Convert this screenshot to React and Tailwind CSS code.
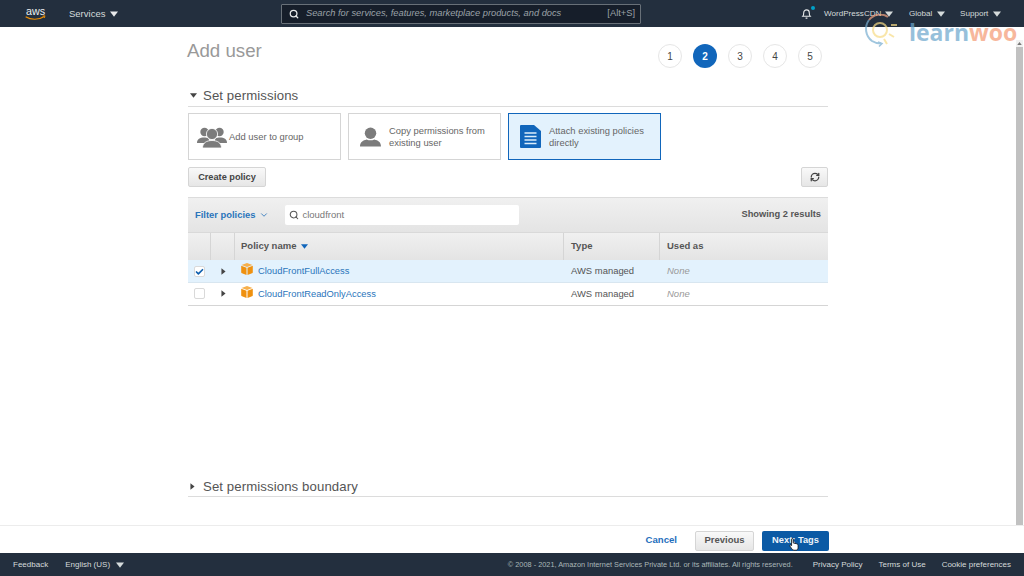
import React from 'react';
import { Search, RefreshCw, ChevronDown, Check } from 'lucide-react';

const Caret = ({ className = 'w-[8px] h-[6px]' }) => (
    <svg viewBox="0 0 10 8" preserveAspectRatio="none" className={`fill-current ${className}`}>
        <path d="M0 0.5h10L5 7.5z" />
    </svg>
);

const CaretRight = () => (
    <svg viewBox="0 0 6 8" className="w-[5px] h-[7px] fill-[#444]">
        <path d="M0.5 0v8L5.5 4z" />
    </svg>
);

const AwsLogo = () => (
    <svg viewBox="0 0 24 16" className="w-[23px] h-[15px]">
        <text x="12" y="9.5" textAnchor="middle" fontSize="11.5" fontFamily="Liberation Sans, sans-serif" fill="#eceff1">aws</text>
        <path d="M1.5 11.5c5.5 3.6 14 3.6 20-.2" fill="none" stroke="#f29100" strokeWidth="1.2" />
        <path d="M19.5 10.8l2.6-.4-.6 2.4" fill="none" stroke="#f29100" strokeWidth="0.9" />
    </svg>
);

const GroupIcon = () => (
    <svg viewBox="0 0 30 22" className="w-[30px] h-[22px] fill-[#7b7b7b] shrink-0">
        <circle cx="7.5" cy="6" r="4.2" />
        <circle cx="22.5" cy="6" r="4.2" />
        <path d="M0 17c0-4 3-5.5 7-5.5s5 1 5 3V17z" />
        <path d="M30 17c0-4-3-5.5-7-5.5s-5 1-5 3V17z" />
        <circle cx="15" cy="8" r="5.6" stroke="#fff" strokeWidth="0.8" />
        <path d="M5.5 22c0-5 4-7.5 9.5-7.5s9.5 2.5 9.5 7.5z" stroke="#fff" strokeWidth="0.8" />
    </svg>
);

const UserIcon = () => (
    <svg viewBox="0 0 22 20" className="w-[21px] h-[20px] fill-[#7b7b7b] shrink-0">
        <circle cx="11" cy="6" r="6" />
        <path d="M0 20c0-5 3-6.5 7-7.5 2.5 1.3 5.5 1.3 8 0 4 1 7 2.5 7 7.5z" />
    </svg>
);

const DocIcon = () => (
    <svg viewBox="0 0 21 23" className="w-[21px] h-[23px] shrink-0">
        <path d="M1 0h13l7 6v16a1 1 0 0 1-1 1H1a1 1 0 0 1-1-1V1a1 1 0 0 1 1-1z" fill="#1166bb" />
        <path d="M4.5 8h12M4.5 11.5h12M4.5 15h12M4.5 18.5h12" stroke="#dceefb" strokeWidth="1.3" />
    </svg>
);

const PolicyIcon = () => (
    <svg viewBox="0 0 12 12" className="w-[12px] h-[12px] shrink-0">
        <path d="M6 0l5.5 2L6 4 .5 2z" fill="#f7b04c" />
        <path d="M.2 2.7L5.500 4.700V12L1 10.300a1 1 0 0 1-.8-1z" fill="#ef9110" />
        <path d="M11.800 2.700L6.500 4.700V12l4.500-1.700a1 1 0 0 0 .8-1z" fill="#ef9110" />
    </svg>
);

const Card = ({ icon, active, children }) => (
    <div className={`w-[153px] h-[47px] flex items-center border-[1.5px] ${active ? 'border-[#1166bb] bg-[#e3f2fd]' : 'border-[#d5d5d5] bg-white'}`}>
        {icon}
        <span className="text-[9.4px] leading-[12px] text-[#666]">{children}</span>
    </div>
);

const Step = ({ n, active }) => (
    <div className={`w-6 h-6 rounded-full flex items-center justify-center text-[10px] ${active ? 'bg-[#1166bb] text-white font-bold' : 'border border-[#e6e6e6] text-[#444]'}`}>
        {n}
    </div>
);

const PolicyRow = ({ name, selected }) => (
    <div className={`flex items-center border-b ${selected ? 'h-[23px] pt-px bg-[#e3f2fd] border-[#d8e6f0]' : 'h-[22.5px] bg-white border-[#d5d5d5]'}`}>
        <div className="w-[23px] flex justify-center">
            <div className="w-[11px] h-[11px] rounded-[2px] border border-[#d9d9d9] bg-white flex items-center justify-center">
                {selected && <Check className="w-[10px] h-[10px] text-[#0f5fae]" strokeWidth={4.5} />}
            </div>
        </div>
        <div className="w-[24px] flex justify-center"><CaretRight /></div>
        <div className="w-[329px] pl-[6px] flex items-center gap-[5px]">
            <span className="-mt-[4px]"><PolicyIcon /></span>
            <span className="text-[9.35px] text-[#2a75bb]">{name}</span>
        </div>
        <div className="w-[96px] pl-[7px] text-[9.45px] text-[#555]">AWS managed</div>
        <div className="pl-[7px] text-[9.5px] italic text-[#999]">None</div>
    </div>
);

const App = () => {
    return (
        <div className="w-[1024px] h-[576px] relative flex flex-col overflow-hidden bg-white font-['Liberation_Sans',Arial,sans-serif]">
            {/* top nav */}
            <header className="h-[27px] shrink-0 bg-[#232f3e] flex items-center text-[#d5dbdb]">
                <div className="ml-[24px] w-[45px] flex"><AwsLogo /></div>
                <div className="mt-px flex items-center gap-[5px] w-[212px] text-[9.5px]">
                    Services <Caret className="w-[8px] h-[6px] text-[#e8eaeb]" />
                </div>
                <div className="w-[360px] h-[20px] bg-[#161e2a] border border-[#687078] rounded-[1px] flex items-center pl-[7px] pr-[5px] text-[9.3px]">
                    <Search className="w-[10px] h-[10px] text-[#e8eaeb] mr-[7px]" strokeWidth={3} />
                    <span className="italic text-[#9ba2a8] flex-1">Search for services, features, marketplace products, and docs</span>
                    <span className="text-[#9ba2a8]">[Alt+S]</span>
                </div>
                <div className="ml-[160px] relative w-[12px] flex">
                    <svg viewBox="0 0 12 12" className="w-[11px] h-[11px] fill-none stroke-[#e8eaeb]" strokeWidth="1.2">
                        <path d="M2 9c1-1 1-2 1-4a3 3 0 0 1 6 0c0 2 0 3 1 4zM5 11h2" />
                    </svg>
                    <span className="absolute -top-[2px] left-[10px] w-[4px] h-[4px] rounded-full bg-[#00a1c9]" />
                </div>
                <div className="mt-px ml-[11px] flex items-center gap-[4px] w-[85px] text-[8.1px]">WordPressCDN <Caret /></div>
                <div className="mt-px flex items-center gap-[5px] w-[51px] text-[8.1px]">Global <Caret /></div>
                <div className="mt-px flex items-center gap-[5px] text-[8.1px]">Support <Caret /></div>
            </header>

            {/* page + scrollbar */}
            <div className="flex-1 flex min-h-0">
                <main className="flex-1 min-w-0 flex justify-center">
                    <div className="w-[640px] flex flex-col">
                        <div className="flex justify-between">
                            <h1 className="mt-[13px] -ml-px text-[18.7px] leading-[22px] text-[#999]">Add user</h1>
                            <div className="flex gap-[11px] mt-[17px] mr-[6px]">
                                <Step n="1" />
                                <Step n="2" active />
                                <Step n="3" />
                                <Step n="4" />
                                <Step n="5" />
                            </div>
                        </div>

                        <div className="mt-[18px] flex items-center h-[21px] border-b border-[#dcdcdc] pb-[1px]">
                            <Caret className="w-[7px] h-[5px] text-[#444] ml-[2px] mr-[6px]" />
                            <h2 className="text-[13.2px] leading-[16px] tracking-[0.1px] text-[#555]">Set permissions</h2>
                        </div>

                        <div className="flex gap-[7px] mt-[6px]">
                            <Card icon={<span className="ml-[7.5px] mr-[2.5px] flex"><GroupIcon /></span>}>Add user to group</Card>
                            <Card icon={<span className="ml-[10.5px] mr-[8.5px] flex"><UserIcon /></span>}>Copy permissions from<br />existing user</Card>
                            <Card active icon={<span className="ml-[10.5px] mr-[8.5px] flex"><DocIcon /></span>}>Attach existing policies<br />directly</Card>
                        </div>

                        <div className="flex justify-between mt-[7px]">
                            <button className="w-[78px] h-[20px] pt-px rounded-[2px] border border-[#d5d5d5] bg-gradient-to-b from-[#f9f9f9] to-[#e6e6e6] text-[9.2px] font-bold text-[#444]">Create policy</button>
                            <button className="w-[27px] h-[20px] rounded-[2px] border border-[#d5d5d5] bg-gradient-to-b from-[#f9f9f9] to-[#e6e6e6] flex items-center justify-center">
                                <RefreshCw className="w-[10px] h-[10px] text-[#444]" strokeWidth={3} />
                            </button>
                        </div>

                        {/* policies table */}
                        <div className="mt-[10px]">
                            <div className="h-[35px] bg-gradient-to-b from-[#f0f0f0] to-[#e4e4e4] border-t border-[#dcdcdc] flex items-center pl-[7px] pr-[7px]">
                                <span className="text-[9.4px] font-bold text-[#2a75bb]">Filter policies</span>
                                <ChevronDown className="w-[10px] h-[10px] text-[#2a75bb] ml-[4px]" />
                                <div className="ml-[16px] w-[234px] h-[20px] bg-white rounded-[2px] flex items-center pl-[4px]">
                                    <Search className="w-[10px] h-[10px] text-[#555] mr-[3px]" strokeWidth={2.5} />
                                    <span className="text-[9.5px] text-[#777]">cloudfront</span>
                                </div>
                                <span className="ml-auto text-[9.3px] font-bold text-[#555]">Showing 2 results</span>
                            </div>
                            <div className="h-[28px] bg-gradient-to-b from-[#f0f0f0] to-[#e4e4e4] border-t border-[#d9d9d9] flex items-center text-[9.5px] font-bold text-[#555]">
                                <div className="w-[23px] h-full border-r border-[#d5d5d5]" />
                                <div className="w-[24px] h-full border-r border-[#d5d5d5]" />
                                <div className="w-[329px] h-full border-r border-[#d5d5d5] pl-[6px] flex items-center gap-[5px]">
                                    Policy name <Caret className="w-[7px] h-[5px] text-[#1166bb]" />
                                </div>
                                <div className="w-[96px] h-full border-r border-[#d5d5d5] pl-[7px] flex items-center">Type</div>
                                <div className="pl-[7px]">Used as</div>
                            </div>
                            <PolicyRow name="CloudFrontFullAccess" selected />
                            <PolicyRow name="CloudFrontReadOnlyAccess" />
                        </div>

                        <div className="mt-auto mb-[28px] flex items-center h-[20px] border-b border-[#dcdcdc]">
                            <span className="ml-[2px] mr-[8px] flex"><CaretRight /></span>
                            <h2 className="text-[13.2px] leading-[16px] tracking-[0.1px] text-[#555]">Set permissions boundary</h2>
                        </div>
                    </div>
                </main>
                <div className="w-[8px] shrink-0 pr-px pt-[13px] flex flex-col">
                    <div className="h-[7px] bg-[#f1f1f1] flex justify-center items-center">
                        <svg viewBox="0 0 6 4" className="w-[5px] h-[3px] fill-[#777]"><path d="M3 0l3 4H0z" /></svg>
                    </div>
                    <div className="flex-1 bg-[#c1c1c1]" />
                </div>
            </div>

            {/* wizard actions */}
            <div className="h-[28px] shrink-0 border-t border-[#ececec] bg-white flex items-center justify-end pr-[195px] pt-[2px]">
                <a className="text-[9.6px] font-bold text-[#1f6fbd] mr-[18px]">Cancel</a>
                <button className="w-[59px] h-[20px] mr-[8px] rounded-[2px] border border-[#d5d5d5] bg-gradient-to-b from-[#f9f9f9] to-[#e6e6e6] text-[9.5px] font-bold text-[#555]">Previous</button>
                <button className="w-[67px] h-[20px] rounded-[2px] bg-[#0b5aa5] text-[9.3px] font-bold text-[#eef4fa]">Next: Tags</button>
            </div>

            {/* footer */}
            <footer className="h-[23px] shrink-0 bg-[#232f3e] flex items-center text-[#d5dbdb] text-[8px]">
                <span className="ml-[13px]">Feedback</span>
                <span className="ml-[17px] flex items-center gap-[6px]">English (US) <Caret /></span>
                <span className="ml-auto text-[7.35px] text-[#aab7b8]">© 2008 - 2021, Amazon Internet Services Private Ltd. or its affiliates. All rights reserved.</span>
                <span className="ml-[20px]">Privacy Policy</span>
                <span className="ml-[16px]">Terms of Use</span>
                <span className="ml-[16px] mr-[13px]">Cookie preferences</span>
            </footer>

            {/* cursor over the Next button */}
            <svg viewBox="0 0 12 16" className="absolute left-[789px] top-[538px] w-[10px] h-[13px]">
                <path d="M3 1.5c0-1 2-1 2 0V6l4 1c1.5.4 2 1 2 2.5V12c0 1.5-1 3-2.5 3H6c-1 0-2-.6-2.6-1.6L1 10c-.6-1 .6-2 1.5-1L3 9.5z" fill="#fff" stroke="#111" strokeWidth="1" />
            </svg>

            {/* learnwoo watermark */}
            <div className="absolute left-[864px] top-[14px] flex items-center pointer-events-none opacity-70">
                <svg viewBox="0 0 36 34" className="w-[36px] h-[34px] shrink-0">
                    <path d="M24 3a14 14 0 0 0-19 3" fill="none" stroke="#f4a582" strokeWidth="2" />
                    <path d="M5 6a15 15 0 0 0 3 21c3 2 6 2.5 9 2.5" fill="none" stroke="#78aed1" strokeWidth="2" />
                    <path d="M14 28l4 1.5-3 3" fill="none" stroke="#78aed1" strokeWidth="1.5" />
                    <circle cx="16" cy="16" r="7" fill="none" stroke="#f7dc86" strokeWidth="2" />
                    <path d="M27 11h6M25 20l5 3M20 25l3 5" stroke="#f7dc86" strokeWidth="2" />
                </svg>
                <span className="ml-[9px] mt-[1px] text-[23px] leading-[16px] whitespace-nowrap font-['Open_Sans',sans-serif] font-bold text-[#6ba6cc]">learn<span className="text-[#f59a73]">woo</span></span>
            </div>
        </div>
    );
};

export default App;
